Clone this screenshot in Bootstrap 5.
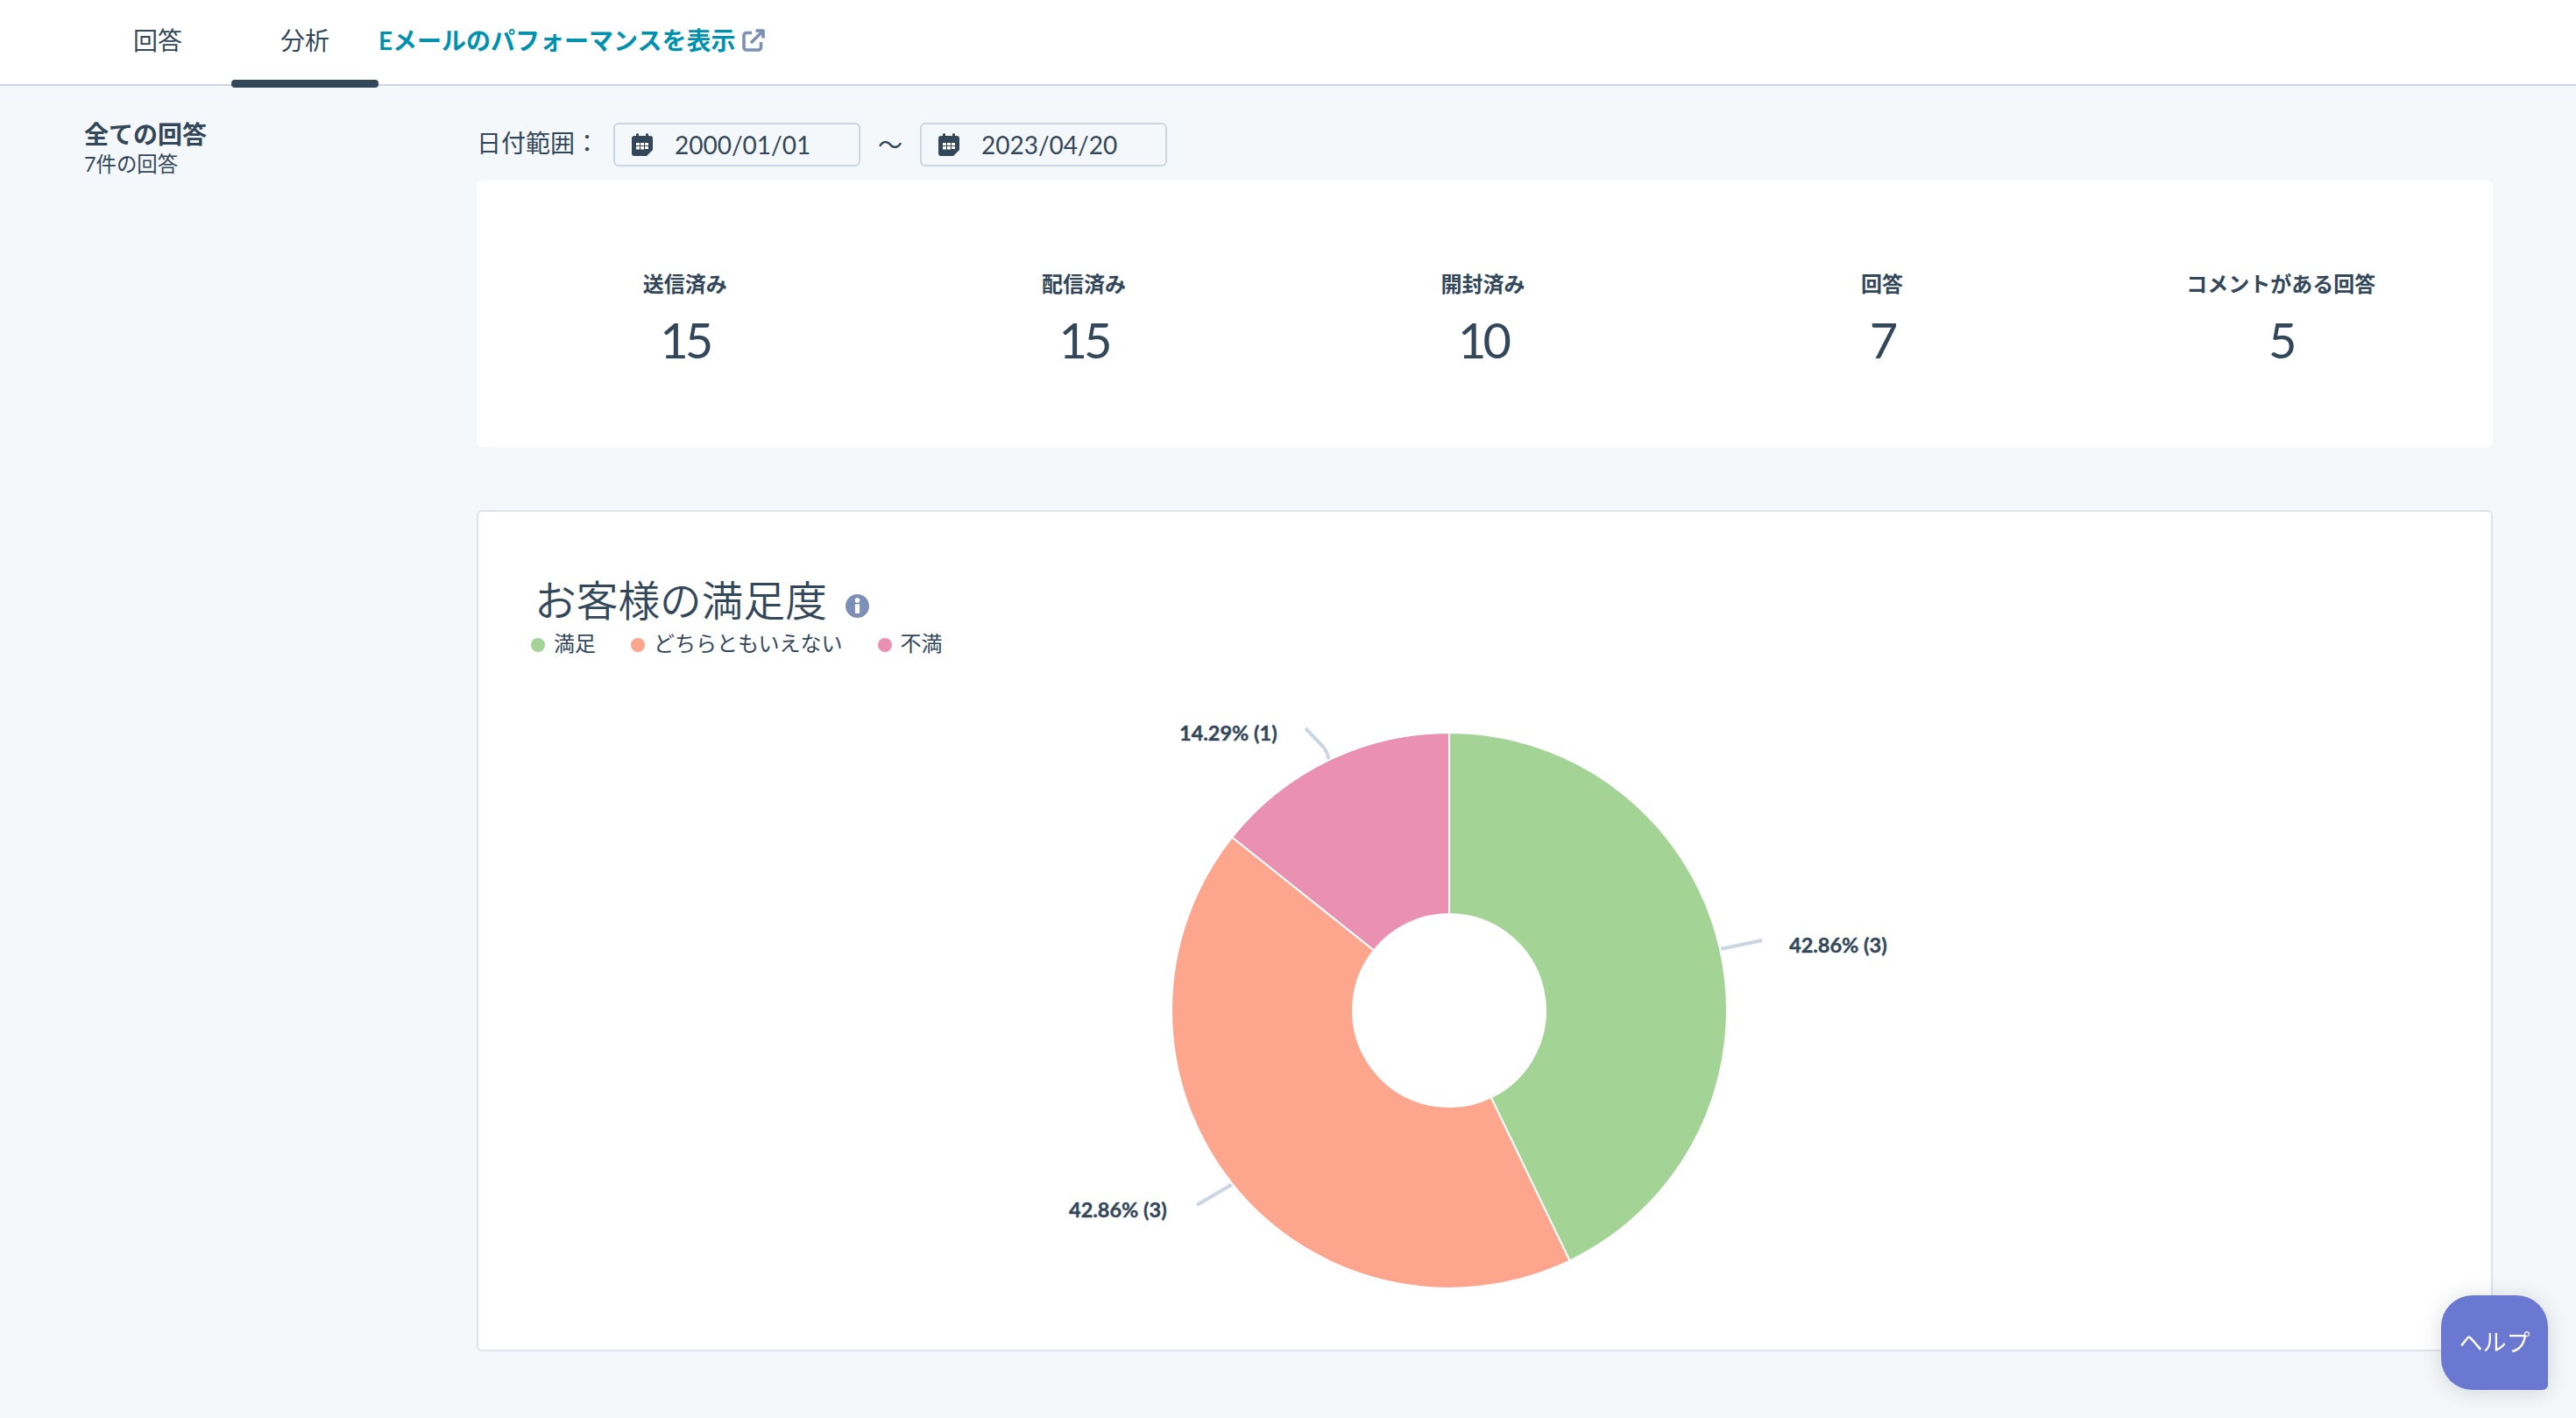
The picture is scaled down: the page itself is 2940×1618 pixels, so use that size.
<!DOCTYPE html>
<html lang="ja">
<head>
<meta charset="utf-8">
<title>分析</title>
<link href="https://cdn.jsdelivr.net/npm/bootstrap@5.3.0/dist/css/bootstrap.min.css" rel="stylesheet">
<style>
html,body{height:100%}
body{background:#f5f8fa;color:#33475b;font-family:"Lato","Noto Sans CJK JP",sans-serif;overflow:hidden}
.topbar{height:98px;background:#fff;border-bottom:2px solid #cbd6e2;padding-left:96px}
.tabitem{width:168px;height:98px;display:flex;align-items:center;justify-content:center;font-size:28px;color:#33475b;text-decoration:none;position:relative;padding-bottom:4px}
.tabitem.on::after{content:"";position:absolute;left:0;right:0;bottom:-3px;height:9px;background:#33475b;border-radius:4px}
.extlink{font-size:28px;font-weight:700;color:#0091ae;text-decoration:none;padding-bottom:4px;gap:7px}
.sidecol{width:544px;padding:35px 0 0 96px;flex:none}
.sidetitle{font-size:28px;font-weight:700;line-height:40px}
.sidesub{font-size:23.4px;line-height:28px}
.maincol{width:2301px;flex:none;padding-top:42px}
.daterow{height:50px;font-size:28px;margin-bottom:16px}
.datebox{width:282px;height:50px;border:2px solid #cbd6e2;border-radius:6px;padding-left:19px;gap:25px;font-size:28px}
.rangelabel{width:156px;padding-bottom:4px}
.tilde{width:68px;text-align:center}
.statspanel{height:304px;background:#fff;border-radius:6px;padding:0 14px 0 10px;margin-bottom:72px}
.statlabel{font-size:24px;font-weight:700;line-height:32px}
.statnum{font-size:56px;font-weight:400;line-height:68px;letter-spacing:-.07em;margin-top:14px;margin-bottom:-14px}
.chartpanel{height:960px;background:#fff;border:2px solid #dfe3eb;border-radius:6px;position:relative}
.charthead{padding:66px 0 0 64px;height:134px}
.charttitle{font-size:47.7px;font-weight:350;line-height:70px;margin:0}
.infoicon{margin:28px 0 0 21px}
.legendrow{padding-left:60px;font-size:24px;line-height:32px;height:32px;gap:40px}
.legenditem{gap:10px}
.legenddot{width:16px;height:16px;border-radius:50%;display:inline-block;margin-top:4px}
.chartsvg{position:absolute;left:0;top:0}
.pielabel{font-family:"Lato","Noto Sans CJK JP",sans-serif;font-size:23.5px;font-weight:700;fill:#33475b;stroke:#33475b;stroke-width:.4}
.helpbtn{position:fixed;left:2786px;top:1478px;width:122px;height:108px;background:#6a78d1;color:#fff;border:0;border-radius:36px 36px 6px 36px;font-size:27px;font-weight:400;box-shadow:0 2px 24px rgba(45,62,80,.18);padding:0}
</style>
</head>
<body>
<nav class="topbar d-flex align-items-center">
  <a class="tabitem" href="#">回答</a>
  <a class="tabitem on" href="#">分析</a>
  <a class="extlink d-flex align-items-center" href="#">Eメールのパフォーマンスを表示
    <svg width="26" height="26" viewBox="0 0 26 26" fill="none" stroke="#7c8fb6" stroke-width="3.6" stroke-linejoin="round"><path d="M11 4.500H5a3 3 0 0 0-3 3V21a3 3 0 0 0 3 3h13.500a3 3 0 0 0 3-3v-6"/><path d="M15.500 2H24v8.500M23.500 2.500 10 16"/></svg>
  </a>
</nav>
<div class="d-flex">
  <aside class="sidecol">
    <div class="sidetitle">全ての回答</div>
    <div class="sidesub">7件の回答</div>
  </aside>
  <main class="maincol">
    <div class="daterow d-flex align-items-center">
      <span class="rangelabel">日付範囲：</span>
      <div class="datebox d-flex align-items-center">
        <svg width="24" height="26" viewBox="0 0 24 26"><path fill="#33475b" d="M5 1.500a1.500 1.500 0 0 1 3 0V3h8V1.500a1.500 1.500 0 0 1 3 0V3h2a3 3 0 0 1 3 3v13l-7 7H3a3 3 0 0 1-3-3V6a3 3 0 0 1 3-3h2z"/><path fill="#fff" d="M5 11h4v3H5zM10 11h4v3h-4zM15 11h4v3h-4zM5 15h4v3.500H5zM10 15h4v3.500h-4zM15 15h4v3h-4z"/></svg>
        <span>2000/01/01</span>
      </div>
      <span class="tilde">〜</span>
      <div class="datebox d-flex align-items-center">
        <svg width="24" height="26" viewBox="0 0 24 26"><path fill="#33475b" d="M5 1.500a1.500 1.500 0 0 1 3 0V3h8V1.500a1.500 1.500 0 0 1 3 0V3h2a3 3 0 0 1 3 3v13l-7 7H3a3 3 0 0 1-3-3V6a3 3 0 0 1 3-3h2z"/><path fill="#fff" d="M5 11h4v3H5zM10 11h4v3h-4zM15 11h4v3h-4zM5 15h4v3.500H5zM10 15h4v3.500h-4zM15 15h4v3h-4z"/></svg>
        <span>2023/04/20</span>
      </div>
    </div>
    <section class="statspanel d-flex align-items-center text-center">
      <div class="flex-fill w-100"><div class="statlabel">送信済み</div><div class="statnum">15</div></div>
      <div class="flex-fill w-100"><div class="statlabel">配信済み</div><div class="statnum">15</div></div>
      <div class="flex-fill w-100"><div class="statlabel">開封済み</div><div class="statnum">10</div></div>
      <div class="flex-fill w-100"><div class="statlabel">回答</div><div class="statnum">7</div></div>
      <div class="flex-fill w-100"><div class="statlabel">コメントがある回答</div><div class="statnum">5</div></div>
    </section>
    <section class="chartpanel">
      <svg class="chartsvg" width="2297" height="956" viewBox="546 584 2297 956" role="img">
        <g stroke="#cbd6e2" stroke-width="4" fill="none">
          <path d="M1963 1083 2011 1073"/>
          <path d="M1517 867Q1515 859 1511 853L1490 831"/>
          <path d="M1407 1351 1366 1375"/>
        </g>
        <g stroke="#fff" stroke-width="2">
          <path fill="#a4d396" d="M1654 836A317 317 0 0 1 1791.500 1438.600L1701.700 1252.100A110 110 0 0 0 1654 1043Z"/>
          <path fill="#fea58e" d="M1791.500 1438.600A317 317 0 0 1 1406.200 955.300L1568 1084.400A110 110 0 0 0 1701.700 1252.100Z"/>
          <path fill="#ea90b1" d="M1406.200 955.300A317 317 0 0 1 1654 836V1043A110 110 0 0 0 1568 1084.400Z"/>
        </g>
        <text class="pielabel" x="2042" y="1087">42.86% (3)</text>
        <text class="pielabel" x="1346" y="845">14.29% (1)</text>
        <text class="pielabel" x="1220" y="1389">42.86% (3)</text>
      </svg>
      <div class="charthead d-flex align-items-start position-relative">
        <h2 class="charttitle">お客様の満足度</h2>
        <svg class="infoicon" width="27" height="27" viewBox="0 0 26 26"><circle cx="13" cy="13" r="13" fill="#7c8fb6"/><rect x="10.500" y="11" width="5" height="10" fill="#fff"/><circle cx="13" cy="6.800" r="2.700" fill="#fff"/></svg>
      </div>
      <div class="legendrow d-flex position-relative">
        <div class="legenditem d-flex align-items-center"><span class="legenddot" style="background:#a4d396"></span>満足</div>
        <div class="legenditem d-flex align-items-center"><span class="legenddot" style="background:#fea58e"></span>どちらともいえない</div>
        <div class="legenditem d-flex align-items-center"><span class="legenddot" style="background:#ea90b1"></span>不満</div>
      </div>
    </section>
  </main>
</div>
<button class="helpbtn" type="button">ヘルプ</button>
</body>
</html>
